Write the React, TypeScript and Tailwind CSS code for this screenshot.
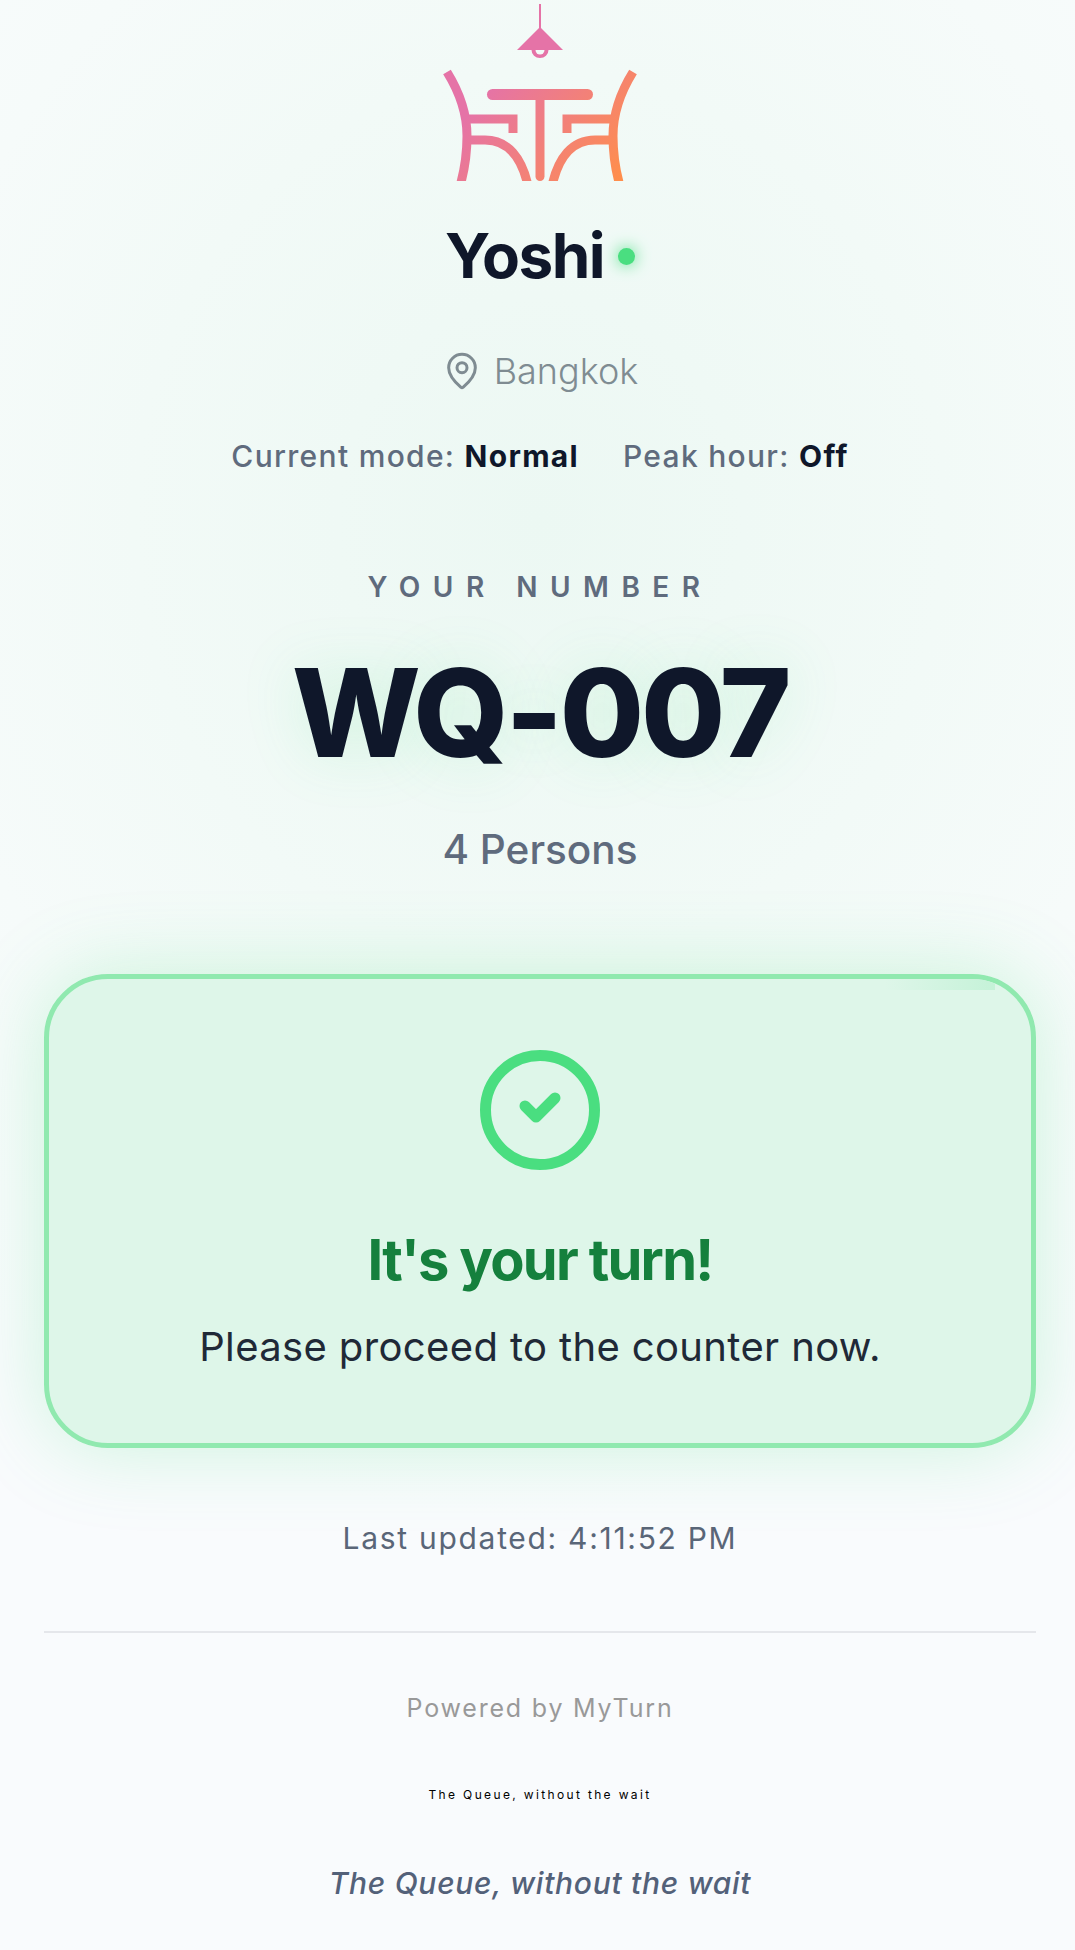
import React from "react";

function Logo() {
  return (
    <svg width="280" height="200" viewBox="0 0 280 200" className="block">
      <defs>
        <linearGradient id="g" gradientUnits="userSpaceOnUse" x1="70" y1="75" x2="215" y2="185">
          <stop offset="0.12" stopColor="#e573a7" />
          <stop offset="1" stopColor="#ff8e4c" />
        </linearGradient>
        <clipPath id="c">
          <rect x="0" y="0" width="280" height="181" />
        </clipPath>
      </defs>
      <path d="M139 4H141V28L163 50H148.500A8.500 8 0 0 1 131.500 50H117L139 28Z" fill="#e573a7" />
      <path d="M135.500 50H144.500A4.500 4.500 0 0 1 135.500 50Z" fill="#f3faf8" />
      <g fill="none" stroke="url(#g)" strokeWidth="9" clipPath="url(#c)">
        <path d="M47 72C60 93 67 115 67 136C67 155 64 172 60 186" />
        <path d="M67 119H113V133" />
        <path d="M70 140H85C108 140 122 158 128 186" />
        <path d="M233 72C220 93 213 115 213 136C213 155 216 172 220 186" />
        <path d="M213 119H167V133" />
        <path d="M210 140H195C172 140 158 158 152 186" />
      </g>
      <rect x="87" y="89" width="106" height="11" rx="5.500" fill="url(#g)" />
      <rect x="135.500" y="95" width="9" height="86" rx="4.500" fill="url(#g)" />
    </svg>
  );
}

export default function App() {
  return (
    <div className="relative w-[1075px] h-[1950px] overflow-hidden bg-[#f9fbfd] font-['Inter','Liberation_Sans',sans-serif]">
      <div className="w-[1080px] h-[1950px] flex flex-col items-center bg-[radial-gradient(ellipse_900px_1000px_at_540px_520px,#ecf8f3_0%,#f2faf7_45%,#f6fbfa_70%,#f9fbfd_100%)]">
        <Logo />
        <div className="mt-[16px] flex items-center h-[80px]">
          <h1 className="text-[62px] leading-[80px] font-bold tracking-[-1.500px] text-[#0f172a]">Yoshi</h1>
          <span className="ml-[14px] w-[17px] h-[17px] rounded-full bg-[#4ade80] shadow-[0_0_16px_#4ade80]" />
        </div>
        <div className="mt-[53px] flex items-center gap-[12px] h-[44px] text-[#7f8c92]">
          <svg width="40" height="40" viewBox="0 0 24 24" fill="none" stroke="currentColor" strokeWidth="1.800" strokeLinecap="round" strokeLinejoin="round">
            <path d="M20 10c0 4.993-5.539 10.193-7.399 11.799a1 1 0 0 1-1.202 0C9.539 20.193 4 14.993 4 10a8 8 0 0 1 16 0" />
            <circle cx="12" cy="10" r="3" />
          </svg>
          <span className="text-[36px] leading-[44px] font-light">Bangkok</span>
        </div>
        <div className="mt-[43px] flex gap-[44px] text-[30px] leading-[40px] font-medium tracking-[1.300px] text-[#5f6b7d]">
          <span>Current mode: <b className="font-bold text-[#0f172a]">Normal</b></span>
          <span>Peak hour: <b className="font-bold text-[#0f172a]">Off</b></span>
        </div>
        <div className="mt-[91px] text-[28px] leading-[40px] font-semibold tracking-[12.500px] text-[#5f6b7d]">YOUR NUMBER</div>
        <div className="mt-[36px] text-[122px] leading-[140px] font-extrabold tracking-[-3.200px] text-[#0f172a] [text-shadow:0_0_60px_rgba(74,222,128,0.18)]">WQ-007</div>
        <div className="mt-[41px] text-[40.500px] leading-[52px] font-medium text-[#5f6b7d]">4 Persons</div>
        <div className="relative mt-[98px] w-[992px] h-[474px] box-border rounded-[64px] border-[5px] border-[#90e9af] bg-[#def6e9] overflow-hidden flex flex-col items-center">
          <div className="absolute top-0 right-[36px] w-[110px] h-[11px] bg-gradient-to-r from-transparent to-[#c5f2d8]" />
          <svg className="mt-[71px]" width="120" height="120" viewBox="0 0 120 120" fill="none" stroke="#4ade80">
            <circle cx="60" cy="60" r="54.500" strokeWidth="11" />
            <path d="M45 56L56 67L75 48" strokeWidth="11" strokeLinecap="round" strokeLinejoin="round" />
          </svg>
          <div className="mt-[58px] text-[56px] leading-[64px] font-[750] tracking-[-1.700px] text-[#15803d]">It's your turn!</div>
          <div className="mt-[29px] text-[40px] leading-[52px] tracking-[0.370px] font-normal text-[#1f2937]">Please proceed to the counter now.</div>
        </div>
        <div className="mt-[70px] text-[30px] leading-[40px] font-normal tracking-[1.700px] text-[#5a6678]">Last updated: 4:11:52 PM</div>
        <div className="mt-[73px] w-[992px] h-[2px] bg-[#e5e7eb]" />
        <div className="mt-[59px] text-[25px] leading-[32px] font-normal tracking-[1.800px] text-[#999]">Powered by MyTurn</div>
        <div className="mt-[63px] text-[12px] leading-[16px] tracking-[2.350px] text-black">The Queue, without the wait</div>
        <div className="mt-[60px] text-[30px] leading-[40px] italic font-medium tracking-[0.700px] text-[#536179]">The Queue, without the wait</div>
      </div>
      <div className="absolute left-[44px] top-[974px] w-[992px] h-[474px] rounded-[64px] shadow-[0_0_80px_rgba(74,222,128,0.25)] pointer-events-none" />
    </div>
  );
}
